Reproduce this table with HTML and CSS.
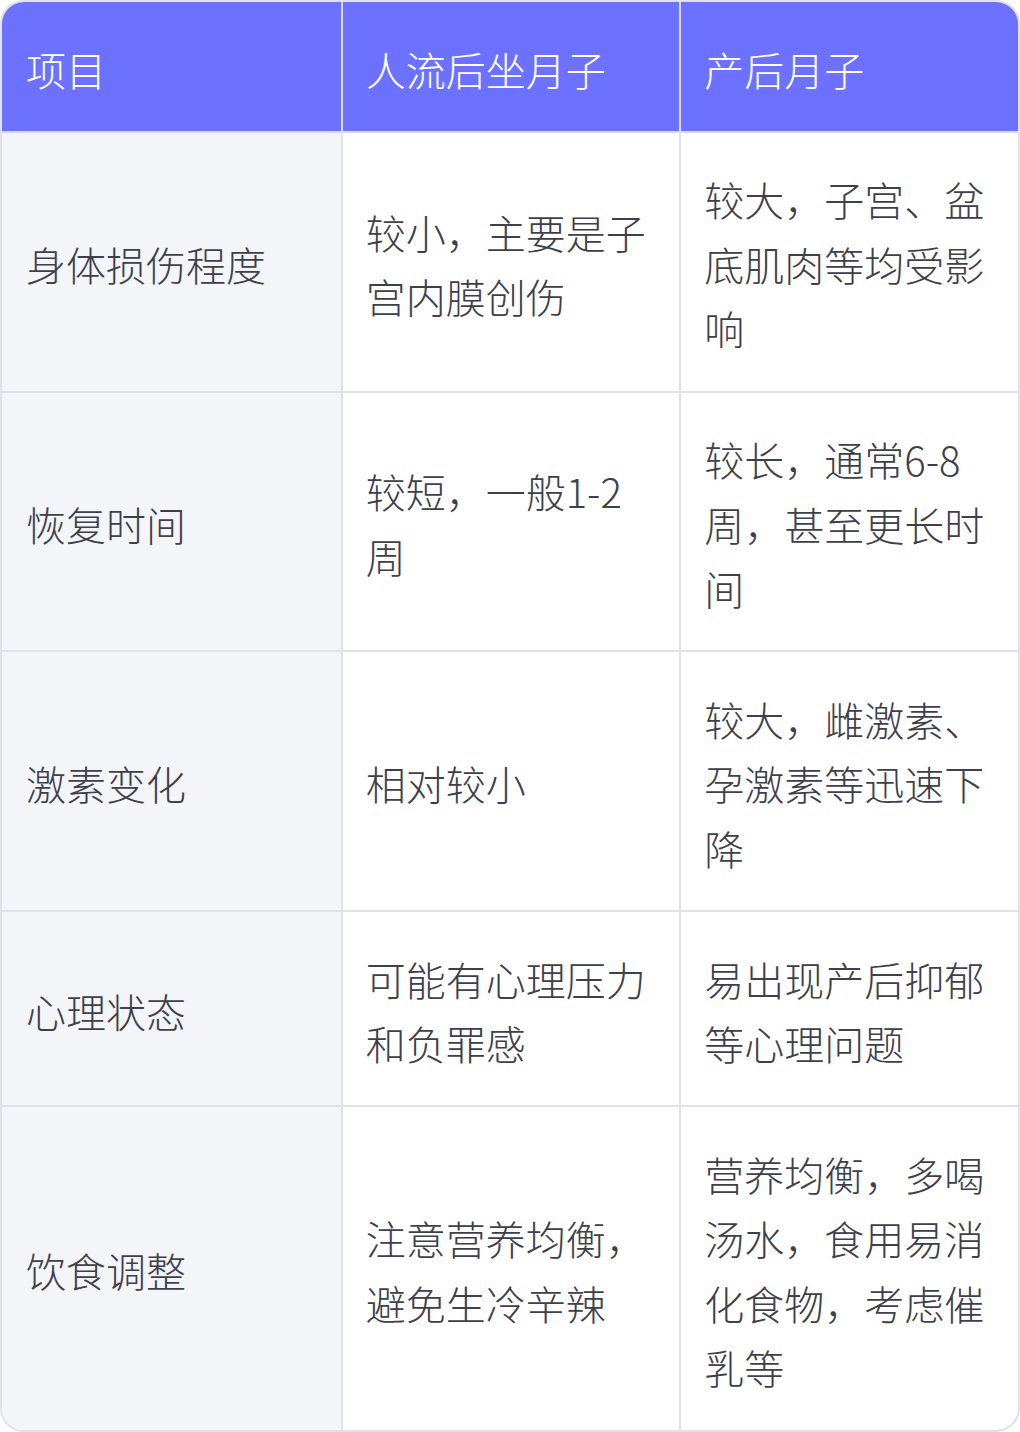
FILE: index.html
```html
<!DOCTYPE html>
<html lang="zh-CN">
<head>
<meta charset="utf-8">
<link rel="stylesheet" href="styles.css">
</head>
<body>
<div class="wrap">
<table class="cmp">
<thead>
<tr><th>项目</th><th>人流后坐月子</th><th>产后月子</th></tr>
</thead>
<tbody>
<tr><td>身体损伤程度</td><td>较小，主要是子宫内膜创伤</td><td>较大，子宫、盆底肌肉等均受影响</td></tr>
<tr><td>恢复时间</td><td>较短，一般1-2周</td><td>较长，通常6-8周，甚至更长时间</td></tr>
<tr><td>激素变化</td><td>相对较小</td><td>较大，雌激素、孕激素等迅速下降</td></tr>
<tr><td>心理状态</td><td>可能有心理压力和负罪感</td><td>易出现产后抑郁等心理问题</td></tr>
<tr><td>饮食调整</td><td>注意营养均衡，避免生冷辛辣</td><td>营养均衡，多喝汤水，食用易消化食物，考虑催乳等</td></tr>
</tbody>
</table>
</div>
</body>
</html>
```
FILE: styles.css
```css
html, body {
  margin: 0;
  padding: 0;
  background: #ffffff;
}
.wrap {
  width: 1020px;
  box-sizing: border-box;
  border: 2px solid #e1e2e8;
  border-radius: 24px;
  overflow: hidden;
}
.cmp {
  width: 100%;
  border-collapse: separate;
  border-spacing: 0;
  table-layout: fixed;
  font-family: "Noto Sans CJK SC", "Noto Sans", sans-serif;
  font-weight: 300;
  font-size: 40px;
  line-height: 64.4px;
  color: #3d404b;
}
.cmp th,
.cmp td {
  padding: 34.5px 24px 30px 23px;
  text-align: left;
  vertical-align: middle;
  border-left: 2px solid #e1e2e8;
  border-top: 2px solid #e1e2e8;
}
.cmp th:first-child,
.cmp td:first-child {
  border-left: none;
  padding-left: 24px;
}
.cmp th {
  border-top: none;
  background: #6c72ff;
  color: #ffffff;
  font-weight: 300;
  border-left-color: #dcdde6;
}
.cmp tbody tr:first-child td {
  border-top-color: #d9daf0;
}
.cmp td:first-child {
  background: #f4f5f9;
}
```
